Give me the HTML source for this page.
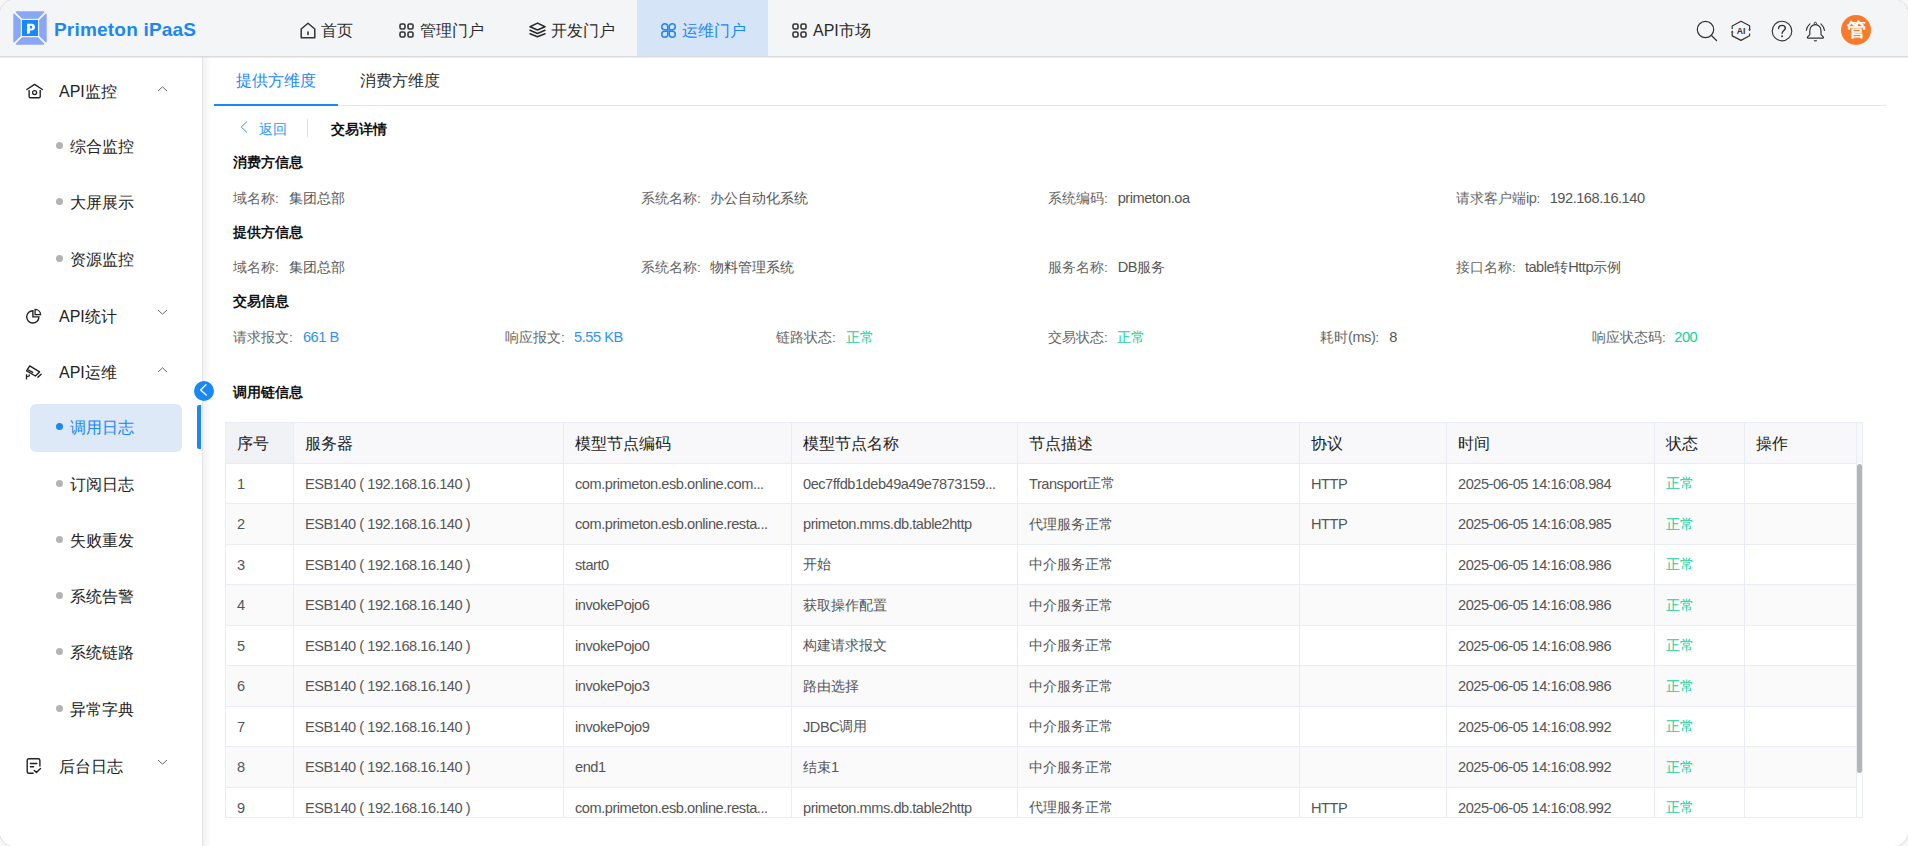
<!DOCTYPE html>
<html><head><meta charset="utf-8">
<style>
*{box-sizing:border-box;margin:0;padding:0}
html,body{width:1908px;height:846px;overflow:hidden;background:#f7f7f7;font-family:"Liberation Sans",sans-serif;color:#333}
#win{position:absolute;left:0;top:0;width:1908px;height:846px;background:#fff;border-radius:14px;overflow:hidden;box-shadow:0 0 0 1px #dedede}
#hdr{position:absolute;left:0;top:0;width:1908px;height:57px;background:#f4f5f7;border-bottom:1px solid #dadbdd;box-shadow:0 1px 0 rgba(205,210,240,0.45);z-index:2}
.abs{position:absolute;white-space:nowrap}
.logo-t{left:54px;top:18.5px;font-size:19px;font-weight:bold;color:#1b87f5;letter-spacing:0.2px}
.nav{top:1.5px;height:56px;line-height:58px;font-size:16px;color:#2b2b2b}
#side{position:absolute;left:0;top:57px;width:203px;height:789px;background:#fff;border-right:1px solid #e4e4e6}
.mi{font-size:16px;color:#222;line-height:20px}
.dot{position:absolute;width:7px;height:7px;border-radius:4px;background:#b3b3b3}
.tab{font-size:16px;line-height:20px;color:#2b2b2b}
.lab{font-size:13.5px;color:#666;line-height:18px}
.val{color:#555}

.sec{font-size:13.5px;font-weight:bold;color:#111;line-height:18px}
.th{font-size:16px;color:#222;line-height:20px}
.td{font-size:13.5px;color:#555;line-height:17px}
.lt{font-size:14.6px;letter-spacing:-0.47px;line-height:0}
.lt2{position:relative;top:0.8px}
</style></head><body>
<div id="win">
<div id="hdr">
<svg class="abs" style="left:13px;top:11px" width="34" height="34" viewBox="0 0 34 34">
    <g fill="#8aa7f7" stroke="#8aa7f7" stroke-width="1.2" stroke-linejoin="round">
    <path d="M3.2 0.9 H30.8 L24.8 7.2 H9.2 Z"/>
    <path d="M0.9 3.2 L7.2 9.2 V24.8 L0.9 30.8 Z"/>
    <path d="M33.1 3.2 L26.8 9.2 V24.8 L33.1 30.8 Z"/>
    <path d="M3.2 33.1 H30.8 L24.8 26.8 H9.2 Z"/>
    </g>
    <rect x="9" y="9" width="16" height="16" fill="#1a89f8"/>
    <path fill="#fff" fill-rule="evenodd" d="M14 12.7 H18.6 C20.8 12.7 22 14.1 22 16.1 C22 18.2 20.6 19.6 18.4 19.6 H16.9 V22.2 L14 22.9 Z M16.9 14.9 V17.4 H18.1 C18.9 17.4 19.3 16.9 19.3 16.15 C19.3 15.4 18.9 14.9 18.1 14.9 Z"/>
  </svg>
<div class="abs logo-t">Primeton iPaaS</div>
<svg class="abs" style="left:300px;top:22px" width="16" height="17" viewBox="0 0 16 17"><path d="M1.2 7 L8 1.2 L14.8 7 V15.8 H1.2 Z" fill="none" stroke="#333" stroke-width="1.5" stroke-linejoin="round"/><path d="M8 10 V12.5" stroke="#333" stroke-width="1.6" stroke-linecap="round"/></svg>
<div class="abs nav" style="left:321px">首页</div>
<svg class="abs" style="left:399px;top:23px" width="15" height="15" viewBox="0 0 15 15"><g fill="none" stroke="#333" stroke-width="1.6"><rect x="1" y="1" width="5" height="5" rx="1.5"/><rect x="9" y="1" width="5" height="5" rx="1.5"/><rect x="1" y="9" width="5" height="5" rx="1.5"/><rect x="9" y="9" width="5" height="5" rx="1.5"/></g></svg>
<div class="abs nav" style="left:420px">管理门户</div>
<svg class="abs" style="left:529px;top:22px" width="17" height="16" viewBox="0 0 17 16"><g fill="none" stroke="#2b2b2b" stroke-width="1.5" stroke-linejoin="round" stroke-linecap="round"><path d="M1 4.7 L8.5 1.1 L16 4.7 L8.5 8 Z"/><path d="M1 8.3 L8.5 11.5 L16 8.3"/><path d="M1 11.7 L8.5 14.8 L16 11.7"/></g></svg>
<div class="abs nav" style="left:551px">开发门户</div>
<div class="abs" style="left:637px;top:0;width:131px;height:56px;background:#d5e5f7"></div>
<svg class="abs" style="left:661px;top:22.8px" width="15" height="15" viewBox="0 0 15 15"><g fill="none" stroke="#1a87f6" stroke-width="1.5" stroke-linejoin="miter"><path d="M6.75 6.75 H3.75 A3 3 0 0 1 0.75 3.75 A3 3 0 0 1 3.75 0.75 A3 3 0 0 1 6.75 3.75 Z"/><path d="M8.25 6.75 H11.25 A3 3 0 0 0 14.25 3.75 A3 3 0 0 0 11.25 0.75 A3 3 0 0 0 8.25 3.75 Z"/><path d="M6.75 8.25 H3.75 A3 3 0 0 0 0.75 11.25 A3 3 0 0 0 3.75 14.25 A3 3 0 0 0 6.75 11.25 Z"/><path d="M8.25 8.25 H11.25 A3 3 0 0 1 14.25 11.25 A3 3 0 0 1 11.25 14.25 A3 3 0 0 1 8.25 11.25 Z"/></g></svg>
<div class="abs nav" style="left:682px;color:#1a87f6">运维门户</div>
<svg class="abs" style="left:792px;top:23px" width="15" height="15" viewBox="0 0 15 15"><g fill="none" stroke="#333" stroke-width="1.6"><rect x="1" y="1" width="5" height="5" rx="1.5"/><rect x="9" y="1" width="5" height="5" rx="1.5"/><rect x="1" y="9" width="5" height="5" rx="1.5"/><rect x="9" y="9" width="5" height="5" rx="1.5"/></g></svg>
<div class="abs nav" style="left:813px">API市场</div>
<svg class="abs" style="left:1696px;top:20px" width="22" height="22" viewBox="0 0 22 22"><circle cx="9.5" cy="9.5" r="8.2" fill="none" stroke="#333" stroke-width="1.2"/><path d="M15.5 15.5 L20.5 20.5" stroke="#333" stroke-width="1.3" stroke-linecap="round"/></svg>
<svg class="abs" style="left:1730px;top:20px" width="22" height="22" viewBox="0 0 22 22"><g fill="none" stroke="#333" stroke-width="1.2" stroke-linejoin="round"><path d="M2.2 8.9 V6 L11 1.3 L19.6 5.7 V9.6"/><path d="M19.6 13.4 V15.7 L11 20.4 L2.2 15.9 V12.2"/></g><path d="M18.2 9.2 L21 9.2 L19.6 11.3 Z M0.8 12.4 L3.6 12.4 L2.2 10.3 Z" fill="#333"/><text x="11" y="13.6" font-size="8.6" font-weight="bold" text-anchor="middle" fill="#333" font-family="Liberation Sans">AI</text></svg>
<svg class="abs" style="left:1771px;top:20px" width="22" height="22" viewBox="0 0 22 22"><circle cx="11" cy="11" r="9.8" fill="none" stroke="#333" stroke-width="1.15"/><path d="M7.6 8.6 C7.6 6.4 9.2 5.4 11 5.4 C12.9 5.4 14.3 6.6 14.3 8.2 C14.3 10.3 11.1 10.8 11.1 13.2" fill="none" stroke="#333" stroke-width="1.4" stroke-linecap="round"/><circle cx="11.1" cy="16.2" r="0.95" fill="#333"/></svg>
<svg class="abs" style="left:1804px;top:19px" width="24" height="24" viewBox="0 0 24 24"><path d="M5.8 15.6 V11.9 C5.8 8.3 8.2 5.6 11.4 5.6 C14.6 5.6 17 8.3 17 11.9 V15.6 L19.2 17.9 Q19.9 19.1 18.7 19.1 H4.1 Q2.9 19.1 3.6 17.9 Z" fill="none" stroke="#333" stroke-width="1.2" stroke-linejoin="round"/><circle cx="11.4" cy="4.4" r="1.1" fill="none" stroke="#333" stroke-width="1"/><path d="M9.6 21.2 H13.2 Q12.9 22.6 11.4 22.6 Q9.9 22.6 9.6 21.2 Z" fill="#333"/><path d="M5.9 4.9 Q3.1 7.4 2.3 11.4 M16.9 4.9 Q19.7 7.4 20.5 11.4" fill="none" stroke="#333" stroke-width="1.1" stroke-linecap="round"/></svg>
<div class="abs" style="left:1841px;top:15px;width:30px;height:30px;border-radius:15px;background:#fa7a2b;color:#fff;font-size:19px;font-weight:bold;line-height:30px;text-align:center">管</div>
</div>
<div id="side">
<div class="abs mi" style="left:59px;top:24.60px">API监控</div>
<svg class="abs" style="left:26px;top:27.00px;overflow:visible" width="17" height="15" viewBox="0 0 17 15"><path d="M0.8 5.5 L8.6 0.4 L16.4 5.5" fill="none" stroke="#222" stroke-width="1.4" stroke-linecap="round" stroke-linejoin="round"/><path d="M3.1 6 V12.5 Q3.1 13.8 4.4 13.8 H12.9 Q14.2 13.8 14.2 12.5 V6" fill="none" stroke="#222" stroke-width="1.4"/><circle cx="8.6" cy="8.6" r="2" fill="none" stroke="#222" stroke-width="1.3"/></svg>
<svg class="abs" style="left:156.5px;top:29.00px" width="11" height="6" viewBox="0 0 11 6"><path d="M1 5 L5.5 0.8 L10 5" fill="none" stroke="#666" stroke-width="1"/></svg>
<div class="dot" style="left:56px;top:85.10px"></div>
<div class="abs mi" style="left:70px;top:80.00px">综合监控</div>
<div class="dot" style="left:56px;top:141.35px"></div>
<div class="abs mi" style="left:70px;top:136.25px">大屏展示</div>
<div class="dot" style="left:56px;top:197.60px"></div>
<div class="abs mi" style="left:70px;top:192.50px">资源监控</div>
<div class="abs mi" style="left:59px;top:249.60px">API统计</div>
<svg class="abs" style="left:25px;top:251.80px;overflow:visible" width="17" height="17" viewBox="0 0 17 17"><path d="M7.9 1.8 A6.1 6.1 0 1 0 13.9 7.9 H7.9 Z" fill="none" stroke="#222" stroke-width="1.4" stroke-linejoin="miter"/><path d="M10.1 0.4 V5.6 H15.6 A5.6 5.6 0 0 0 10.1 0.4 Z" fill="none" stroke="#222" stroke-width="1.3"/></svg>
<svg class="abs" style="left:156.5px;top:252.00px" width="11" height="6" viewBox="0 0 11 6"><path d="M1 1 L5.5 5.2 L10 1" fill="none" stroke="#666" stroke-width="1"/></svg>
<div class="abs mi" style="left:59px;top:305.85px">API运维</div>
<svg class="abs" style="left:26px;top:308.00px;overflow:visible" width="17" height="16" viewBox="0 0 17 16"><path d="M3.7 0.9 L13.6 6.9 L9.4 11 L0.6 5.9 Z" fill="none" stroke="#222" stroke-width="1.4" stroke-linejoin="round"/><path d="M2.2 4.9 L7.2 7.6" stroke="#222" stroke-width="1.3"/><path d="M11.9 12.3 L15.2 9.2" stroke="#222" stroke-width="1.4" stroke-linecap="round"/><path d="M0.5 9.2 V14.6 M0.5 11.8 L3.3 10.9 V9.4" fill="none" stroke="#222" stroke-width="1.3"/></svg>
<svg class="abs" style="left:156.5px;top:310.25px" width="11" height="6" viewBox="0 0 11 6"><path d="M1 5 L5.5 0.8 L10 5" fill="none" stroke="#666" stroke-width="1"/></svg>
<div class="abs" style="left:30px;top:346.5px;width:152px;height:48px;border-radius:6px;background:#dde9f7"></div>
<div class="dot" style="left:56px;top:366.35px;background:#1a87f6"></div>
<div class="abs mi" style="left:70px;top:361.25px;color:#1a87f6">调用日志</div>
<div class="dot" style="left:56px;top:422.60px"></div>
<div class="abs mi" style="left:70px;top:417.50px">订阅日志</div>
<div class="dot" style="left:56px;top:478.85px"></div>
<div class="abs mi" style="left:70px;top:473.75px">失败重发</div>
<div class="dot" style="left:56px;top:535.10px"></div>
<div class="abs mi" style="left:70px;top:530.00px">系统告警</div>
<div class="dot" style="left:56px;top:591.35px"></div>
<div class="abs mi" style="left:70px;top:586.25px">系统链路</div>
<div class="dot" style="left:56px;top:647.60px"></div>
<div class="abs mi" style="left:70px;top:642.50px">异常字典</div>
<div class="abs mi" style="left:59px;top:699.60px">后台日志</div>
<svg class="abs" style="left:26px;top:701.00px;overflow:visible" width="16" height="17" viewBox="0 0 16 17"><path d="M7.2 15.2 H2.8 Q1.2 15.2 1.2 13.6 V2.4 Q1.2 0.8 2.8 0.8 H12.3 Q13.9 0.8 13.9 2.4 V8" fill="none" stroke="#222" stroke-width="1.4" stroke-linecap="round"/><path d="M4.4 5.5 H10.8 M4.4 8.7 H7.6" stroke="#222" stroke-width="1.4" stroke-linecap="round"/><path d="M8.3 12.4 L10.4 14.6 L14.5 10.6" fill="none" stroke="#222" stroke-width="1.4" stroke-linecap="round" stroke-linejoin="round"/></svg>
<svg class="abs" style="left:156.5px;top:702.00px" width="11" height="6" viewBox="0 0 11 6"><path d="M1 1 L5.5 5.2 L10 1" fill="none" stroke="#666" stroke-width="1"/></svg>
</div>
<div class="abs" style="left:203px;top:57px;width:8px;height:789px;background:linear-gradient(90deg,#f2f2f2,rgba(255,255,255,0))"></div>
<div class="abs" style="left:197px;top:405px;width:4px;height:43.5px;border-radius:2px 0 0 2px;background:#1a87f6"></div>
<svg class="abs" style="left:194px;top:380.8px" width="20" height="20" viewBox="0 0 20 20"><circle cx="10" cy="10" r="10" fill="#1a87f6"/><path d="M12 3.8 L6.6 9 L12.3 14" fill="none" stroke="#fff" stroke-width="1.3" stroke-linecap="round" stroke-linejoin="round"/></svg>
<div class="abs tab" style="left:236px;top:71px;color:#1a87f6">提供方维度</div>
<div class="abs tab" style="left:360px;top:71px">消费方维度</div>
<div class="abs" style="left:214px;top:105px;width:1672px;height:1px;background:#e4e7ed"></div>
<div class="abs" style="left:214px;top:104px;width:124px;height:2px;background:#1a87f6"></div>
<svg class="abs" style="left:239px;top:120px" width="10" height="14" viewBox="0 0 10 14"><path d="M8 1.5 L2.2 7 L8 12.5" fill="none" stroke="#3395f5" stroke-width="1"/></svg>
<div class="abs lab" style="left:259px;top:121.3px;color:#3395f5">返回</div>
<div class="abs" style="left:307px;top:119px;width:1px;height:18px;background:#dcdfe6"></div>
<div class="abs sec" style="left:331px;top:121px">交易详情</div>
<div class="abs sec" style="left:233px;top:154px">消费方信息</div>
<div class="abs lab" style="left:233px;top:190px">域名称:</div><div class="abs lab val" style="left:289.1px;top:190px">集团总部</div>
<div class="abs lab" style="left:641px;top:190px">系统名称:</div><div class="abs lab val" style="left:709.9px;top:190px">办公自动化系统</div>
<div class="abs lab" style="left:1048px;top:190px">系统编码:</div><div class="abs lab val" style="left:1117.7px;top:190px"><span class="lt">primeton.oa</span></div>
<div class="abs lab" style="left:1456px;top:190px">请求客户端<span class="lt">ip</span>:</div><div class="abs lab val" style="left:1549.7px;top:190px"><span class="lt">192.168.16.140</span></div>
<div class="abs sec" style="left:233px;top:224px">提供方信息</div>
<div class="abs lab" style="left:233px;top:259px">域名称:</div><div class="abs lab val" style="left:289.1px;top:259px">集团总部</div>
<div class="abs lab" style="left:641px;top:259px">系统名称:</div><div class="abs lab val" style="left:709.9px;top:259px">物料管理系统</div>
<div class="abs lab" style="left:1048px;top:259px">服务名称:</div><div class="abs lab val" style="left:1117.7px;top:259px"><span class="lt">DB</span>服务</div>
<div class="abs lab" style="left:1456px;top:259px">接口名称:</div><div class="abs lab val" style="left:1524.9px;top:259px"><span class="lt">table</span>转<span class="lt">Http</span>示例</div>
<div class="abs sec" style="left:233px;top:293px">交易信息</div>
<div class="abs lab" style="left:233px;top:329px">请求报文:</div><div class="abs lab val" style="left:302.9px;top:329px;color:#2c93f5"><span class="lt">661 B</span></div>
<div class="abs lab" style="left:505px;top:329px">响应报文:</div><div class="abs lab val" style="left:574.1px;top:329px;color:#2c93f5"><span class="lt">5.55 KB</span></div>
<div class="abs lab" style="left:776px;top:329px">链路状态:</div><div class="abs lab val" style="left:846.1px;top:329px;color:#14cf9e">正常</div>
<div class="abs lab" style="left:1048px;top:329px">交易状态:</div><div class="abs lab val" style="left:1117.3px;top:329px;color:#14cf9e">正常</div>
<div class="abs lab" style="left:1320px;top:329px">耗时<span class="lt">(ms)</span>:</div><div class="abs lab val" style="left:1389.3px;top:329px"><span class="lt">8</span></div>
<div class="abs lab" style="left:1592px;top:329px">响应状态码:</div><div class="abs lab val" style="left:1674.3px;top:329px;color:#14cf9e"><span class="lt">200</span></div>
<div class="abs sec" style="left:233px;top:384px">调用链信息</div>
<div class="abs" style="left:225px;top:422px;width:1638px;height:396px;border:1px solid #e9ecf3;overflow:hidden">
<div class="abs" style="left:0;top:0;width:1636px;height:40px;background:#f8f8fa"></div>
<div class="abs" style="left:0;top:0;width:68px;height:40px;background:#f0f2f5"></div>
<div class="abs th" style="left:11px;top:11px">序号</div>
<div class="abs th" style="left:79px;top:11px">服务器</div>
<div class="abs th" style="left:349px;top:11px">模型节点编码</div>
<div class="abs th" style="left:577px;top:11px">模型节点名称</div>
<div class="abs th" style="left:803px;top:11px">节点描述</div>
<div class="abs th" style="left:1085px;top:11px">协议</div>
<div class="abs th" style="left:1232px;top:11px">时间</div>
<div class="abs th" style="left:1440px;top:11px">状态</div>
<div class="abs th" style="left:1530px;top:11px">操作</div>
<div class="abs" style="left:0;top:41px;width:1630px;height:39px;background:#fff"></div>
<div class="abs" style="left:0;top:40px;width:1630px;height:1px;background:#e9ecf3"></div>
<div class="abs td" style="left:11px;top:52.0px"><span class="lt lt2">1</span></div>
<div class="abs td" style="left:79px;top:52.0px"><span class="lt lt2">ESB140 ( 192.168.16.140 )</span></div>
<div class="abs td" style="left:349px;top:52.0px"><span class="lt lt2">com.primeton.esb.online.com...</span></div>
<div class="abs td" style="left:577px;top:52.0px"><span class="lt lt2">0ec7ffdb1deb49a49e7873159...</span></div>
<div class="abs td" style="left:803px;top:52.0px"><span class="lt lt2">Transport</span>正常</div>
<div class="abs td" style="left:1085px;top:52.0px"><span class="lt lt2">HTTP</span></div>
<div class="abs td" style="left:1232px;top:52.0px"><span class="lt lt2">2025-06-05 14:16:08.984</span></div>
<div class="abs td" style="left:1440px;top:52.0px;color:#14cf9e">正常</div>
<div class="abs" style="left:0;top:81px;width:1630px;height:40px;background:#fafafa"></div>
<div class="abs" style="left:0;top:80px;width:1630px;height:1px;background:#e9ecf3"></div>
<div class="abs td" style="left:11px;top:92.5px"><span class="lt lt2">2</span></div>
<div class="abs td" style="left:79px;top:92.5px"><span class="lt lt2">ESB140 ( 192.168.16.140 )</span></div>
<div class="abs td" style="left:349px;top:92.5px"><span class="lt lt2">com.primeton.esb.online.resta...</span></div>
<div class="abs td" style="left:577px;top:92.5px"><span class="lt lt2">primeton.mms.db.table2http</span></div>
<div class="abs td" style="left:803px;top:92.5px">代理服务正常</div>
<div class="abs td" style="left:1085px;top:92.5px"><span class="lt lt2">HTTP</span></div>
<div class="abs td" style="left:1232px;top:92.5px"><span class="lt lt2">2025-06-05 14:16:08.985</span></div>
<div class="abs td" style="left:1440px;top:92.5px;color:#14cf9e">正常</div>
<div class="abs" style="left:0;top:122px;width:1630px;height:39px;background:#fff"></div>
<div class="abs" style="left:0;top:121px;width:1630px;height:1px;background:#e9ecf3"></div>
<div class="abs td" style="left:11px;top:133.0px"><span class="lt lt2">3</span></div>
<div class="abs td" style="left:79px;top:133.0px"><span class="lt lt2">ESB140 ( 192.168.16.140 )</span></div>
<div class="abs td" style="left:349px;top:133.0px"><span class="lt lt2">start0</span></div>
<div class="abs td" style="left:577px;top:133.0px">开始</div>
<div class="abs td" style="left:803px;top:133.0px">中介服务正常</div>
<div class="abs td" style="left:1232px;top:133.0px"><span class="lt lt2">2025-06-05 14:16:08.986</span></div>
<div class="abs td" style="left:1440px;top:133.0px;color:#14cf9e">正常</div>
<div class="abs" style="left:0;top:162px;width:1630px;height:40px;background:#fafafa"></div>
<div class="abs" style="left:0;top:161px;width:1630px;height:1px;background:#e9ecf3"></div>
<div class="abs td" style="left:11px;top:173.5px"><span class="lt lt2">4</span></div>
<div class="abs td" style="left:79px;top:173.5px"><span class="lt lt2">ESB140 ( 192.168.16.140 )</span></div>
<div class="abs td" style="left:349px;top:173.5px"><span class="lt lt2">invokePojo6</span></div>
<div class="abs td" style="left:577px;top:173.5px">获取操作配置</div>
<div class="abs td" style="left:803px;top:173.5px">中介服务正常</div>
<div class="abs td" style="left:1232px;top:173.5px"><span class="lt lt2">2025-06-05 14:16:08.986</span></div>
<div class="abs td" style="left:1440px;top:173.5px;color:#14cf9e">正常</div>
<div class="abs" style="left:0;top:203px;width:1630px;height:39px;background:#fff"></div>
<div class="abs" style="left:0;top:202px;width:1630px;height:1px;background:#e9ecf3"></div>
<div class="abs td" style="left:11px;top:214.0px"><span class="lt lt2">5</span></div>
<div class="abs td" style="left:79px;top:214.0px"><span class="lt lt2">ESB140 ( 192.168.16.140 )</span></div>
<div class="abs td" style="left:349px;top:214.0px"><span class="lt lt2">invokePojo0</span></div>
<div class="abs td" style="left:577px;top:214.0px">构建请求报文</div>
<div class="abs td" style="left:803px;top:214.0px">中介服务正常</div>
<div class="abs td" style="left:1232px;top:214.0px"><span class="lt lt2">2025-06-05 14:16:08.986</span></div>
<div class="abs td" style="left:1440px;top:214.0px;color:#14cf9e">正常</div>
<div class="abs" style="left:0;top:243px;width:1630px;height:40px;background:#fafafa"></div>
<div class="abs" style="left:0;top:242px;width:1630px;height:1px;background:#e9ecf3"></div>
<div class="abs td" style="left:11px;top:254.5px"><span class="lt lt2">6</span></div>
<div class="abs td" style="left:79px;top:254.5px"><span class="lt lt2">ESB140 ( 192.168.16.140 )</span></div>
<div class="abs td" style="left:349px;top:254.5px"><span class="lt lt2">invokePojo3</span></div>
<div class="abs td" style="left:577px;top:254.5px">路由选择</div>
<div class="abs td" style="left:803px;top:254.5px">中介服务正常</div>
<div class="abs td" style="left:1232px;top:254.5px"><span class="lt lt2">2025-06-05 14:16:08.986</span></div>
<div class="abs td" style="left:1440px;top:254.5px;color:#14cf9e">正常</div>
<div class="abs" style="left:0;top:284px;width:1630px;height:39px;background:#fff"></div>
<div class="abs" style="left:0;top:283px;width:1630px;height:1px;background:#e9ecf3"></div>
<div class="abs td" style="left:11px;top:295.0px"><span class="lt lt2">7</span></div>
<div class="abs td" style="left:79px;top:295.0px"><span class="lt lt2">ESB140 ( 192.168.16.140 )</span></div>
<div class="abs td" style="left:349px;top:295.0px"><span class="lt lt2">invokePojo9</span></div>
<div class="abs td" style="left:577px;top:295.0px"><span class="lt lt2">JDBC</span>调用</div>
<div class="abs td" style="left:803px;top:295.0px">中介服务正常</div>
<div class="abs td" style="left:1232px;top:295.0px"><span class="lt lt2">2025-06-05 14:16:08.992</span></div>
<div class="abs td" style="left:1440px;top:295.0px;color:#14cf9e">正常</div>
<div class="abs" style="left:0;top:324px;width:1630px;height:40px;background:#fafafa"></div>
<div class="abs" style="left:0;top:323px;width:1630px;height:1px;background:#e9ecf3"></div>
<div class="abs td" style="left:11px;top:335.5px"><span class="lt lt2">8</span></div>
<div class="abs td" style="left:79px;top:335.5px"><span class="lt lt2">ESB140 ( 192.168.16.140 )</span></div>
<div class="abs td" style="left:349px;top:335.5px"><span class="lt lt2">end1</span></div>
<div class="abs td" style="left:577px;top:335.5px">结束<span class="lt lt2">1</span></div>
<div class="abs td" style="left:803px;top:335.5px">中介服务正常</div>
<div class="abs td" style="left:1232px;top:335.5px"><span class="lt lt2">2025-06-05 14:16:08.992</span></div>
<div class="abs td" style="left:1440px;top:335.5px;color:#14cf9e">正常</div>
<div class="abs" style="left:0;top:365px;width:1630px;height:39px;background:#fff"></div>
<div class="abs" style="left:0;top:364px;width:1630px;height:1px;background:#e9ecf3"></div>
<div class="abs td" style="left:11px;top:376.0px"><span class="lt lt2">9</span></div>
<div class="abs td" style="left:79px;top:376.0px"><span class="lt lt2">ESB140 ( 192.168.16.140 )</span></div>
<div class="abs td" style="left:349px;top:376.0px"><span class="lt lt2">com.primeton.esb.online.resta...</span></div>
<div class="abs td" style="left:577px;top:376.0px"><span class="lt lt2">primeton.mms.db.table2http</span></div>
<div class="abs td" style="left:803px;top:376.0px">代理服务正常</div>
<div class="abs td" style="left:1085px;top:376.0px"><span class="lt lt2">HTTP</span></div>
<div class="abs td" style="left:1232px;top:376.0px"><span class="lt lt2">2025-06-05 14:16:08.992</span></div>
<div class="abs td" style="left:1440px;top:376.0px;color:#14cf9e">正常</div>
<div class="abs" style="left:67px;top:0;width:1px;height:396px;background:#e9ecf3"></div>
<div class="abs" style="left:337px;top:0;width:1px;height:396px;background:#e9ecf3"></div>
<div class="abs" style="left:565px;top:0;width:1px;height:396px;background:#e9ecf3"></div>
<div class="abs" style="left:791px;top:0;width:1px;height:396px;background:#e9ecf3"></div>
<div class="abs" style="left:1073px;top:0;width:1px;height:396px;background:#e9ecf3"></div>
<div class="abs" style="left:1220px;top:0;width:1px;height:396px;background:#e9ecf3"></div>
<div class="abs" style="left:1428px;top:0;width:1px;height:396px;background:#e9ecf3"></div>
<div class="abs" style="left:1518px;top:0;width:1px;height:396px;background:#e9ecf3"></div>
<div class="abs" style="left:1630px;top:0;width:1px;height:396px;background:#e9ecf3"></div>
<div class="abs" style="left:1631px;top:41px;width:6px;height:355px;background:#fff"></div>
<div class="abs" style="left:1631px;top:41px;width:5px;height:308.5px;border-radius:3px;background:#b4b4b8"></div>
</div>
</div>
</body></html>
